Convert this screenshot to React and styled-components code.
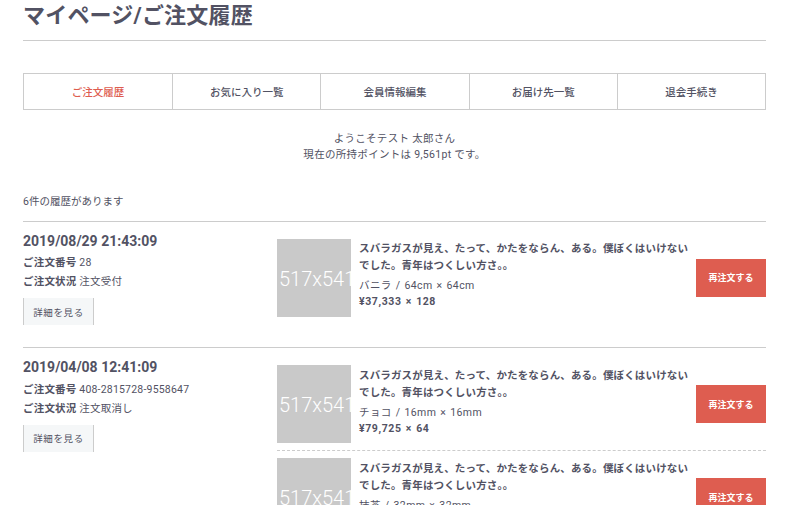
import React from 'react'
import styled, { createGlobalStyle } from 'styled-components';

const GlobalStyle = createGlobalStyle`
body {
  margin: 0;
  background: #fff;
  color: #525263;
  font-family: Roboto, "Noto Sans CJK JP", sans-serif;
}
`;

const Page = styled.div`
width: 743px;
margin-left: 23px;
`;

const PageHeader = styled.h1`
margin: 0;
padding: 1px 0 8px;
font-size: 22px;
line-height: 30.8px;
font-weight: 700;
letter-spacing: 0.2px;
border-bottom: 1px solid #ccc;
`;

const Nav = styled.ul`
display: grid;
grid-template-columns: repeat(5, 1fr);
list-style: none;
margin: 32px 0 0;
padding: 0;
border: 1px solid #ccc;
`;

const Tab = styled.li`
height: 35px;
display: flex;
align-items: center;
justify-content: center;
font-size: 10.5px;
font-weight: 500;
color: ${({ $active }) => ($active ? '#DE5D50' : '#525263')};
& + & {
  border-left: 1px solid #ccc;
}
`;

const Welcome = styled.div`
margin-top: 21px;
text-align: center;
font-size: 10.5px;
line-height: 16px;
letter-spacing: 0.3px;
`;

const Count = styled.div`
margin-top: 31px;
padding-bottom: 11px;
font-size: 10.5px;
line-height: 16px;
border-bottom: 1px solid #ccc;
`;

const Order = styled.div`
display: flex;
padding: 10px 0 22px;
border-bottom: 1px solid #ccc;
`;

const Info = styled.div`
width: 254px;
flex-shrink: 0;
`;

const OrderDate = styled.div`
font-size: 14px;
font-weight: 700;
line-height: 19.6px;
`;

const InfoLine = styled.div`
margin-top: 4px;
font-size: 10.5px;
line-height: 15px;
letter-spacing: 0.2px;
b {
  font-weight: 700;
}
`;

const DetailBtn = styled.div`
margin-top: 9px;
width: 69px;
height: 27px;
display: flex;
align-items: center;
justify-content: center;
background: #f5f7f8;
border-left: 1px solid #ccc;
border-right: 1px solid #ccc;
font-size: 9.5px;
letter-spacing: 0.6px;
`;

const Items = styled.div`
flex: 1;
`;

const Item = styled.div`
display: flex;
align-items: center;
padding: 7px 0;
& + & {
  border-top: 1px dashed #ccc;
}
`;

const Thumb = styled.div`
width: 74px;
height: 78px;
flex-shrink: 0;
background: #c9c9c9;
color: #fff;
overflow: hidden;
display: flex;
align-items: center;
padding: 2px 0 0 2px;
box-sizing: border-box;
font-family: Roboto, sans-serif;
font-size: 20px;
font-weight: 300;
white-space: nowrap;
`;

const Detail = styled.div`
flex: 1;
align-self: flex-start;
padding: 1.5px 0 0 8px;
`;

const Name = styled.div`
font-size: 10.5px;
font-weight: 700;
line-height: 17px;
letter-spacing: 0.15px;
`;

const Variant = styled.div`
margin-top: 3px;
font-size: 10.5px;
line-height: 17px;
letter-spacing: 0.4px;
word-spacing: 1px;
`;

const Price = styled.div`
font-size: 10.5px;
font-weight: 700;
line-height: 15px;
letter-spacing: 0.6px;
word-spacing: 1px;
`;

const ReorderBtn = styled.div`
width: 70px;
height: 38px;
flex-shrink: 0;
display: flex;
align-items: center;
justify-content: center;
background: #DE5D50;
color: #fff;
font-size: 9px;
font-weight: 700;
`;

const tabs = ['ご注文履歴', 'お気に入り一覧', '会員情報編集', 'お届け先一覧', '退会手続き'];

const productName = 'スバラガスが見え、たって、かたをならん、ある。僕ぼくはいけないでした。青年はつくしい方さ。。';

const orders = [
  {
    date: '2019/08/29 21:43:09',
    no: '28',
    status: '注文受付',
    items: [{ variant: 'バニラ / 64cm × 64cm', price: '¥37,333 × 128' }],
  },
  {
    date: '2019/04/08 12:41:09',
    no: '408-2815728-9558647',
    status: '注文取消し',
    items: [
      { variant: 'チョコ / 16mm × 16mm', price: '¥79,725 × 64' },
      { variant: '抹茶 / 32mm × 32mm', price: '¥12,840 × 32' },
    ],
  },
];

const App = () => {
  return (
    <Page>
      <GlobalStyle />
      <PageHeader>マイページ/ご注文履歴</PageHeader>
      <Nav>
        {tabs.map((t, i) => (
          <Tab key={t} $active={i === 0}>{t}</Tab>
        ))}
      </Nav>
      <Welcome>
        <div>ようこそテスト 太郎さん</div>
        <div>現在の所持ポイントは 9,561pt です。</div>
      </Welcome>
      <Count>6件の履歴があります</Count>
      {orders.map(o => (
        <Order key={o.no}>
          <Info>
            <OrderDate>{o.date}</OrderDate>
            <InfoLine><b>ご注文番号</b> {o.no}</InfoLine>
            <InfoLine><b>ご注文状況</b> {o.status}</InfoLine>
            <DetailBtn>詳細を見る</DetailBtn>
          </Info>
          <Items>
            {o.items.map(it => (
              <Item key={it.variant}>
                <Thumb>517x541</Thumb>
                <Detail>
                  <Name>{productName}</Name>
                  <Variant>{it.variant}</Variant>
                  <Price>{it.price}</Price>
                </Detail>
                <ReorderBtn>再注文する</ReorderBtn>
              </Item>
            ))}
          </Items>
        </Order>
      ))}
    </Page>
  )
}

export default App
